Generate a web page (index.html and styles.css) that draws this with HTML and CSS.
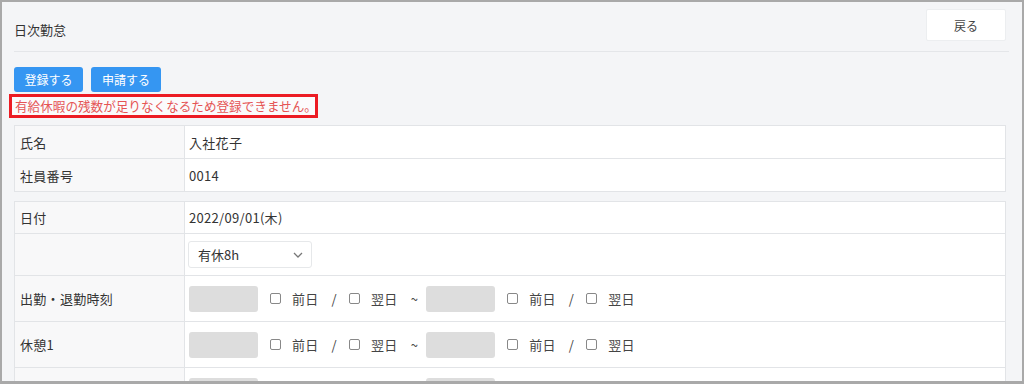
FILE: index.html
```html
<!DOCTYPE html>
<html lang="ja">
<head>
    <meta charset="UTF-8">
    <meta name="viewport" content="width=device-width, initial-scale=1.0">
    <title>日次勤怠</title>
    <link rel="stylesheet" href="styles.css">
</head>
<body>
    <div class="frame">
        <div class="page-header">
            <h1 class="page-title">日次勤怠</h1>
            <button class="back-button">戻る</button>
        </div>

        <div class="actions">
            <button class="primary-button">登録する</button>
            <button class="primary-button">申請する</button>
        </div>

        <div class="error-message">有給休暇の残数が足りなくなるため登録できません。</div>

        <table class="info-table">
            <tr>
                <th>氏名</th>
                <td>入社花子</td>
            </tr>
            <tr>
                <th>社員番号</th>
                <td>0014</td>
            </tr>
        </table>

        <table class="info-table work-table">
            <tr class="row-date">
                <th>日付</th>
                <td>2022/09/01(木)</td>
            </tr>
            <tr class="row-select">
                <th></th>
                <td>
                    <div class="select-box">
                        <span>有休8h</span>
                        <svg width="10" height="6" viewBox="0 0 10 6"><path d="M1 1l4 4 4-4" fill="none" stroke="#777" stroke-width="1.3"/></svg>
                    </div>
                </td>
            </tr>
            <tr class="row-time">
                <th>出勤・退勤時刻</th>
                <td>
                    <div class="time-line">
                        <span class="time-input"></span>
                        <span class="check"></span><span class="day">前日</span>
                        <span class="sep">/</span>
                        <span class="check"></span><span class="day">翌日</span>
                        <span class="tilde">~</span>
                        <span class="time-input"></span>
                        <span class="check"></span><span class="day">前日</span>
                        <span class="sep">/</span>
                        <span class="check"></span><span class="day">翌日</span>
                    </div>
                </td>
            </tr>
            <tr class="row-time">
                <th>休憩1</th>
                <td>
                    <div class="time-line">
                        <span class="time-input"></span>
                        <span class="check"></span><span class="day">前日</span>
                        <span class="sep">/</span>
                        <span class="check"></span><span class="day">翌日</span>
                        <span class="tilde">~</span>
                        <span class="time-input"></span>
                        <span class="check"></span><span class="day">前日</span>
                        <span class="sep">/</span>
                        <span class="check"></span><span class="day">翌日</span>
                    </div>
                </td>
            </tr>
            <tr class="row-time row-cut">
                <th></th>
                <td>
                    <div class="time-line">
                        <span class="time-input"></span>
                        <span class="gap-wide"></span>
                        <span class="time-input"></span>
                    </div>
                </td>
            </tr>
        </table>
    </div>
</body>
</html>
```

FILE: styles.css
```css
* {
    box-sizing: border-box;
}

body {
    margin: 0;
    font-family: "Noto Sans CJK JP", "Noto Sans", sans-serif;
    font-size: 13px;
    color: #333;
    background-color: #ffffff;
}

.frame {
    width: 1024px;
    height: 384px;
    overflow: hidden;
    border: 2px solid #a9a9a9;
    border-bottom-width: 3px;
    background-color: #f4f5f7;
    padding: 7px 16px 0 12px;
}

.page-header {
    display: flex;
    justify-content: space-between;
    align-items: flex-start;
    border-bottom: 1px solid #e4e6e9;
    padding-bottom: 10px;
    margin-right: -3px;
}

.page-title {
    margin: 0;
    padding-top: 11px;
    font-size: 13px;
    font-weight: normal;
    line-height: 20px;
    color: #333;
}

.back-button {
    width: 80px;
    height: 32px;
    margin-right: 3px;
    border: 1px solid #eceef0;
    border-radius: 2px;
    background-color: #ffffff;
    font-family: inherit;
    font-size: 12px;
    color: #444;
}

.actions {
    display: flex;
    gap: 8px;
    margin-top: 15px;
}

.primary-button {
    height: 25px;
    padding: 0;
    border: none;
    border-radius: 3px;
    background-color: #3596f2;
    color: #ffffff;
    font-family: inherit;
    font-size: 12px;
}

.actions .primary-button:first-child {
    width: 69px;
}

.actions .primary-button:last-child {
    width: 70px;
}

.error-message {
    width: 309px;
    height: 24px;
    margin: 2px 0 0 -5px;
    padding: 0 0 0 3px;
    border: 3px solid #ec1c24;
    background-color: #fbfbfc;
    color: #e55555;
    font-size: 12.6px;
    line-height: 18px;
    white-space: nowrap;
}

.info-table {
    width: 992px;
    margin: 7px 0 0 0;
    border-collapse: collapse;
    background-color: #ffffff;
}

.info-table th,
.info-table td {
    border: 1px solid #e2e4e7;
    height: 33px;
    padding: 0 4px;
    text-align: left;
    font-weight: normal;
    vertical-align: middle;
    letter-spacing: 0.3px;
}

.info-table th {
    width: 170px;
    padding-left: 5px;
    background-color: #f8f8f9;
}

.work-table {
    margin-top: 9px;
}

.row-date td,
.row-date th {
    height: 32px;
}

.row-select td,
.row-select th {
    height: 42px;
}

.row-time td,
.row-time th {
    height: 46px;
}

.select-box {
    display: flex;
    justify-content: space-between;
    align-items: center;
    width: 124px;
    height: 27px;
    margin-left: -1px;
    padding: 0 8px 0 9px;
    border: 1px solid #e6e8ea;
    border-radius: 3px;
    background-color: #ffffff;
    letter-spacing: 0;
}

.time-line {
    display: flex;
    align-items: center;
}

.time-input {
    width: 69px;
    height: 26px;
    border-radius: 3px;
    background-color: #dddddd;
    margin-right: 12px;
}

.check {
    width: 11px;
    height: 11px;
    border: 1px solid #888;
    border-radius: 2px;
    background-color: #ffffff;
    margin-right: 11px;
}

.day {
    color: #444;
}

.sep {
    margin: 0 12px 0 13px;
    color: #444;
}

.tilde {
    margin: 0 8px 0 13px;
    color: #444;
}

.gap-wide {
    width: 156px;
}
```
